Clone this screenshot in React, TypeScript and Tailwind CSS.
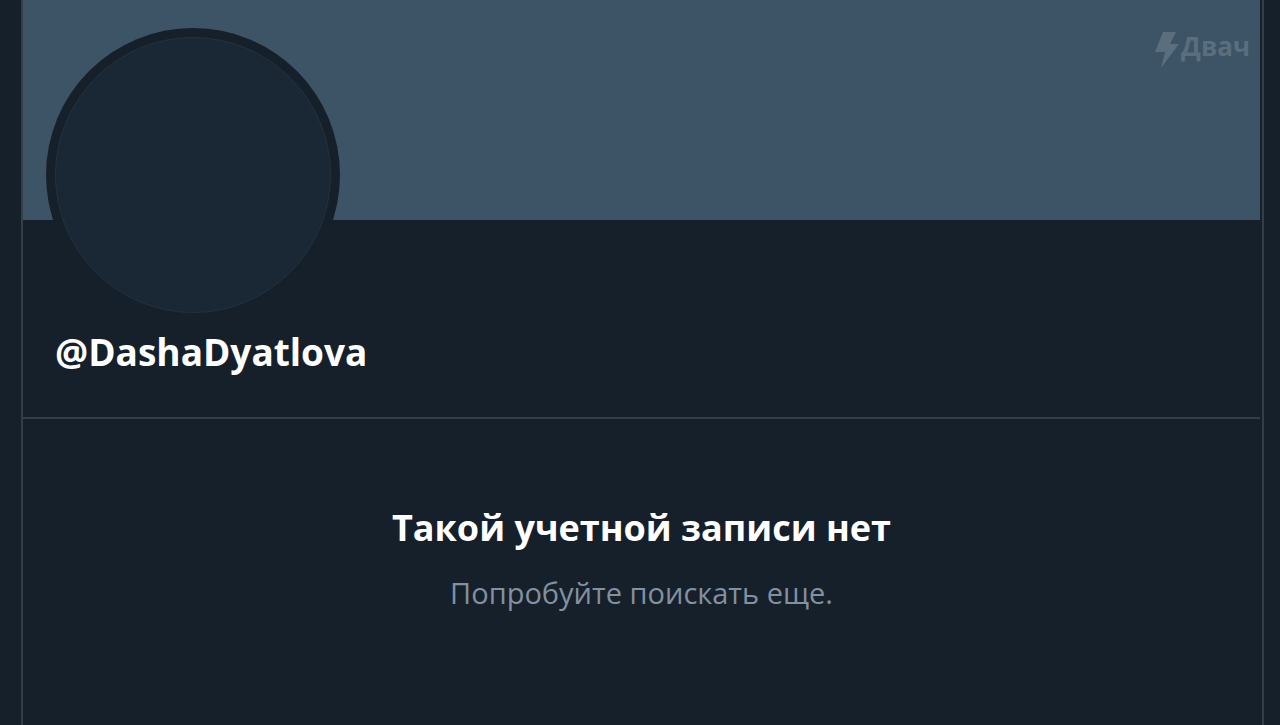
export default function App() {
  return (
    <div className="min-h-screen flex bg-[#16202a] pl-[21px] pr-4 font-['Open_Sans','Noto_Sans',sans-serif]">
      <main className="flex-1 border-x-2 border-[#323e48] pr-0.5">
        <header className="relative h-[220px] bg-[#3d5466]">
          <div className="absolute top-7 left-[23px] size-[294px] rounded-full bg-[#16202a] p-[9px]">
            <div className="size-full rounded-full border border-[#233240] bg-[#1a2734]" />
          </div>
          <div className="absolute top-7 right-2.5 flex items-start gap-0.5 text-[#5a6e7e]">
            <svg width="24" height="36" viewBox="0 0 24 36" className="mt-1" fill="currentColor" aria-hidden="true">
              <path d="M8 0H21L15 12H24L6 36L10 20H0Z" />
            </svg>
            <span className="text-[26px] leading-9 font-bold">Двач</span>
          </div>
        </header>
        <section className="border-b-2 border-[#323e48] px-8 pt-[108px] pb-[41px]">
          <h1 className="text-[37px] leading-12 font-bold text-white">@DashaDyatlova</h1>
        </section>
        <section className="pt-[85px] text-center">
          <h2 className="text-[36px] leading-12 font-bold text-white">Такой учетной записи нет</h2>
          <p className="mt-[21px] text-[29px] leading-10 text-[#8290a0]">Попробуйте поискать еще.</p>
        </section>
      </main>
    </div>
  );
}
